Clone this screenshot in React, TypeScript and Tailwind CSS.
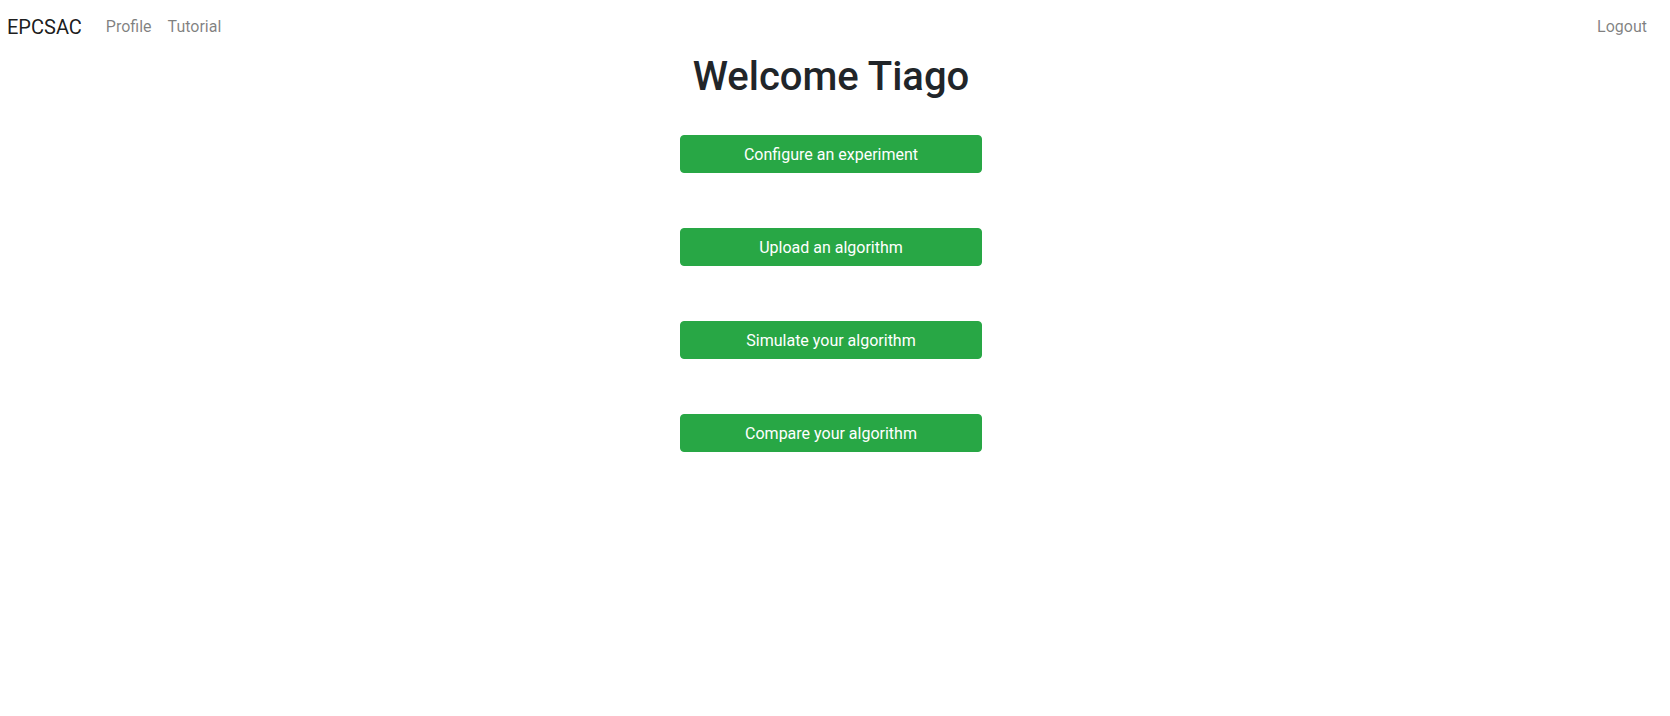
export default function App() {
  const buttons = [
    "Configure an experiment",
    "Upload an algorithm",
    "Simulate your algorithm",
    "Compare your algorithm",
  ];
  return (
    <div className="min-h-[716px] bg-white" style={{ fontFamily: "Roboto, 'Liberation Sans', sans-serif" }}>
      <nav className="flex items-center h-[50px] pt-1 pl-[7px] pr-[15px]">
        <span className="text-[20px] leading-[30px] text-[rgba(0,0,0,0.9)] mr-4">EPCSAC</span>
        <a className="px-2 text-base leading-6 text-[rgba(0,0,0,0.5)]">Profile</a>
        <a className="px-2 text-base leading-6 text-[rgba(0,0,0,0.5)]">Tutorial</a>
        <div className="flex-1" />
        <a className="px-2 text-base leading-6 text-[rgba(0,0,0,0.5)]">Logout</a>
      </nav>
      <div className="flex flex-col items-center pr-2">
        <h1 className="mt-[3px] text-[40px] leading-[48px] font-medium text-[#212529]">Welcome Tiago</h1>
        <div className="flex flex-col gap-[55px] mt-[34px]">
          {buttons.map((b) => (
            <button
              key={b}
              className="w-[302px] h-[38px] pt-px rounded bg-[#28a745] border border-[#28a745] text-white text-base leading-6"
            >
              {b}
            </button>
          ))}
        </div>
      </div>
    </div>
  );
}
